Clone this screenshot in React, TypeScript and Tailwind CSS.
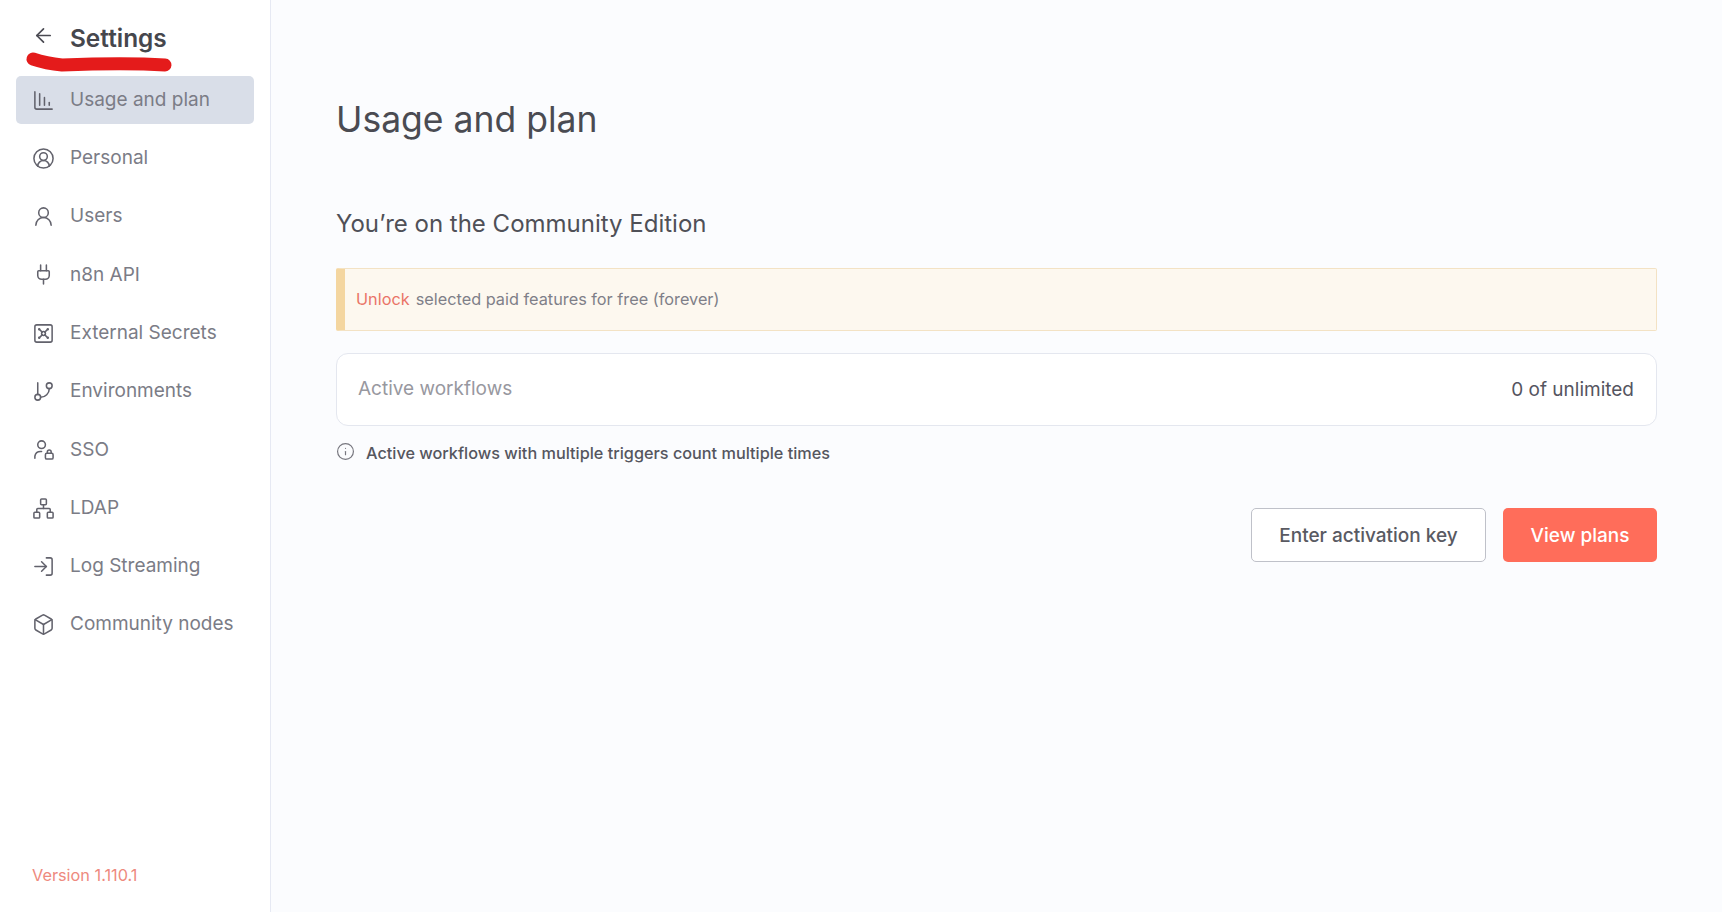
import {
  ArrowLeft,
  Box,
  ChartColumnDecreasing,
  CircleUserRound,
  GitBranch,
  Info,
  LogIn,
  Network,
  Plug,
  UserRound,
  Vault,
} from 'lucide-react';

function SsoIcon({ size, strokeWidth, className }: { size: number; strokeWidth: number; className: string }) {
  return (
    <svg
      width={size}
      height={size}
      viewBox="0 0 24 24"
      fill="none"
      stroke="currentColor"
      strokeWidth={strokeWidth}
      strokeLinecap="round"
      strokeLinejoin="round"
      className={className}
    >
      <circle cx="10" cy="7" r="4" />
      <path d="M3 21v-2a6 6 0 0 1 6-5h1" />
      <rect x="14" y="16" width="8" height="6" rx="1.5" />
      <path d="M16 16v-1.5a2 2 0 0 1 4 0V16" />
    </svg>
  );
}

const items = [
  { label: 'Usage and plan', icon: ChartColumnDecreasing, active: true },
  { label: 'Personal', icon: CircleUserRound },
  { label: 'Users', icon: UserRound },
  { label: 'n8n API', icon: Plug },
  { label: 'External Secrets', icon: Vault },
  { label: 'Environments', icon: GitBranch },
  { label: 'SSO', icon: SsoIcon },
  { label: 'LDAP', icon: Network },
  { label: 'Log Streaming', icon: LogIn },
  { label: 'Community nodes', icon: Box },
];

export default function App() {
  return (
    <div className="flex h-[912px] overflow-hidden bg-[#fbfcfe] font-['Inter',sans-serif] text-[#55555f]">
      <aside className="relative flex w-[271px] shrink-0 flex-col border-r border-[#e6e9f3] bg-white">
        <div className="flex h-[76px] items-center pl-[32px]">
          <ArrowLeft size={23} strokeWidth={1.75} className="mb-[6px] text-[#4a4a52]" />
          <span className="ml-[15px] text-[24.4px] font-semibold text-[#46474d]">Settings</span>
        </div>
        {/* red marker scribble from the screenshot */}
        <svg className="absolute left-0 top-0" width="200" height="80" fill="none">
          <path
            d="M33 59 C42 62 52 64 62 65 C90 64 130 63 165 65"
            stroke="#e41b1b"
            strokeWidth="13"
            strokeLinecap="round"
          />
        </svg>
        <nav className="flex flex-col gap-[10.3px] px-[16px]">
          {items.map((it) => (
            <div
              key={it.label}
              className={`flex h-[48px] items-center rounded-[5px] pl-[16px] ${it.active ? 'bg-[#d9dee8]' : ''}`}
            >
              <it.icon size={23} strokeWidth={1.6} className="shrink-0 text-[#62626c]" />
              <span className="ml-[15px] text-[19px] text-[#7b7c86]">{it.label}</span>
            </div>
          ))}
        </nav>
        <div className="mt-auto pb-[25px] pl-[32px] text-[16.3px] text-[#ee8a7e]">Version 1.110.1</div>
      </aside>

      <main className="flex-1 pl-[65px] pr-[65px] pt-[96px]">
        <h1 className="text-[35.5px] leading-[48px] text-[#4a4b52]">Usage and plan</h1>
        <h2 className="mt-[63px] text-[24px] leading-[34px] text-[#4f5057]">You’re on the Community Edition</h2>

        <div className="mt-[27px] flex h-[63px] items-center rounded-[2px] border border-l-[9px] border-[#f3e2c4] border-l-[#f4d6a0] bg-[#fdf8ef] pl-[11px] text-[16.3px] text-[#7f7f88]">
          <span className="text-[#ea7467]">Unlock</span>
          <span className="ml-[6px]">selected paid features for free (forever)</span>
        </div>

        <div className="mt-[22px] flex h-[73px] items-center justify-between rounded-[12px] border border-[#e4e7ef] bg-white pl-[21px] pr-[22px]">
          <span className="text-[19px] text-[#98989f]">Active workflows</span>
          <span className="pt-[1px] text-[19px] text-[#55555f]">0 of unlimited</span>
        </div>

        <div className="mt-[15px] flex items-center">
          <Info size={19} strokeWidth={1.5} className="mb-[3px] text-[#77777f]" />
          <span className="ml-[11px] text-[16.25px] font-medium text-[#55565e]">
            Active workflows with multiple triggers count multiple times
          </span>
        </div>

        <div className="mt-[43px] flex justify-end gap-[17px]">
          <button className="h-[54px] w-[235px] rounded-[5px] border border-[#bfc1c9] bg-white pt-[1px] text-[19px] font-medium text-[#595a62]">
            Enter activation key
          </button>
          <button className="h-[54px] w-[154px] rounded-[5px] bg-[#ff6d5a] pt-[1px] text-[19px] font-medium text-white">
            View plans
          </button>
        </div>
      </main>
    </div>
  );
}
